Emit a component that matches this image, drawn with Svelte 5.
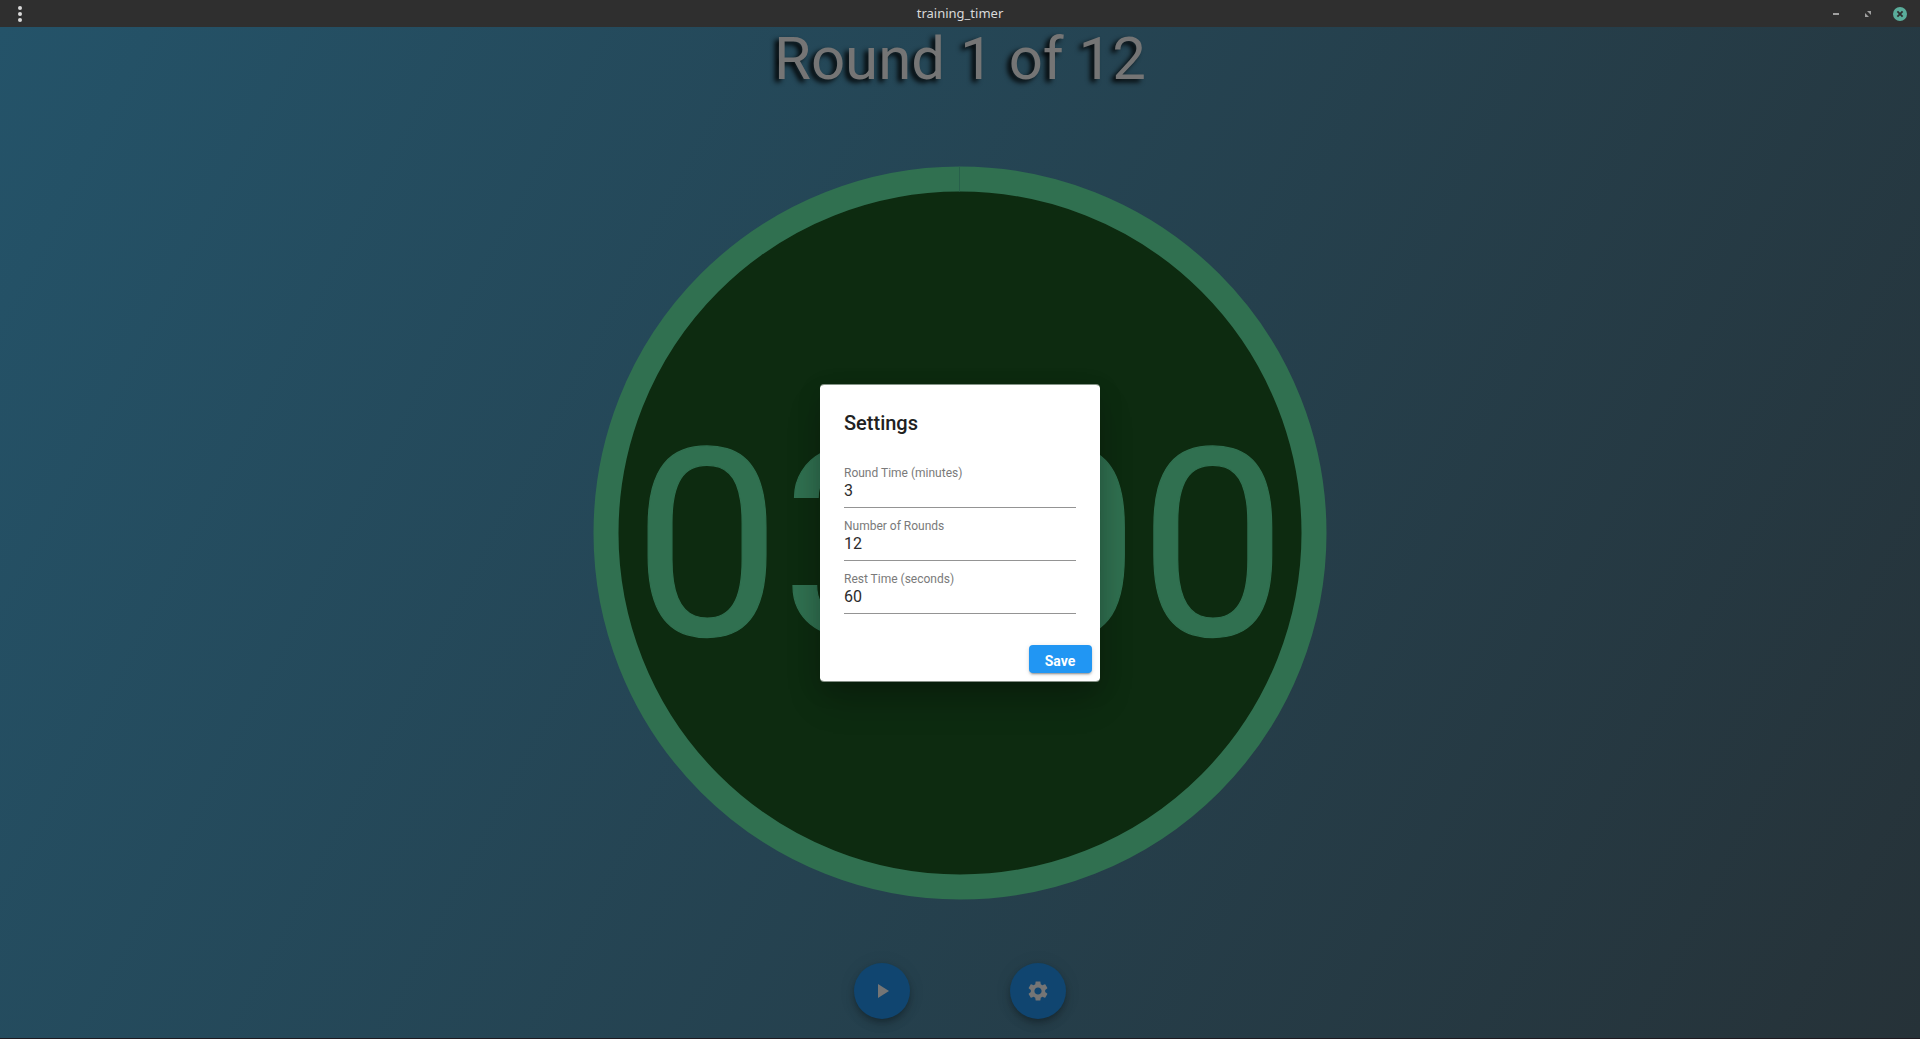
<script>
  const fields = [
    { id: 'round-time', label: 'Round Time (minutes)', value: '3' },
    { id: 'rounds', label: 'Number of Rounds', value: '12' },
    { id: 'rest-time', label: 'Rest Time (seconds)', value: '60' }
  ];
</script>

<div class="window">
  <header class="titlebar">
    <svg class="menu" viewBox="0 0 6 18" width="6" height="18">
      <circle cx="3" cy="3" r="2" /><circle cx="3" cy="9" r="2" /><circle cx="3" cy="15" r="2" />
    </svg>
    <span class="name">training_timer</span>
    <div class="controls">
      <svg width="6" height="14" viewBox="0 0 6 14"><path d="M0 6h6v2H0z" fill="#a0a0a0" /></svg>
      <svg width="6" height="6" viewBox="0 0 6 6"><path d="M2 0h4v4zM0 2l4 4H0z" fill="#a0a0a0" /></svg>
      <svg width="14" height="14" viewBox="0 0 14 14">
        <circle cx="7" cy="7" r="7" fill="#5aad9b" />
        <path d="M4.4 4.4l5.2 5.2M9.6 4.4L4.4 9.6" stroke="#2f2f2f" stroke-width="1.8" />
      </svg>
    </div>
  </header>

  <main>
    <h1>Round 1 of 12</h1>
    <div class="dial">
      <svg class="ring" viewBox="0 0 734 734">
        <circle cx="367" cy="367" r="354" />
        <path d="M366 .5h1v25h-1z" />
      </svg>
      <span class="time">03:00</span>
    </div>
    <div class="actions">
      <button class="fab" aria-label="Start">
        <svg viewBox="0 0 24 24"><path d="M8 5v14l11-7z" /></svg>
      </button>
      <button class="fab" aria-label="Settings">
        <svg viewBox="0 0 24 24"><path d="M19.14 12.94c.04-.3.06-.61.06-.94 0-.32-.02-.64-.07-.94l2.03-1.58c.18-.14.23-.41.12-.61l-1.92-3.32c-.12-.22-.37-.29-.59-.22l-2.39.96c-.5-.38-1.03-.7-1.62-.94l-.36-2.54c-.04-.24-.24-.41-.48-.41h-3.84c-.24 0-.43.17-.47.41l-.36 2.54c-.59.24-1.13.57-1.62.94l-2.39-.96c-.22-.08-.47 0-.59.22L2.74 8.87c-.12.21-.08.47.12.61l2.03 1.58c-.05.3-.09.63-.09.94s.02.64.07.94l-2.03 1.58c-.18.14-.23.41-.12.61l1.92 3.32c.12.22.37.29.59.22l2.39-.96c.5.38 1.03.7 1.62.94l.36 2.54c.05.24.24.41.48.41h3.84c.24 0 .44-.17.47-.41l.36-2.54c.59-.24 1.13-.56 1.62-.94l2.39.96c.22.08.47 0 .59-.22l1.92-3.32c.12-.22.07-.47-.12-.61l-2.01-1.58zM12 15.6c-1.98 0-3.6-1.62-3.6-3.6s1.62-3.6 3.6-3.6 3.6 1.62 3.6 3.6-1.62 3.6-3.6 3.6z" /></svg>
      </button>
    </div>

    <div class="overlay">
      <section class="dialog">
        <h2>Settings</h2>
        <div class="fields">
          {#each fields as field (field.id)}
            <div class="field">
              <label for={field.id}>{field.label}</label>
              <input id={field.id} value={field.value} />
            </div>
          {/each}
        </div>
        <button class="save">Save</button>
      </section>
    </div>
  </main>
</div>

<style>
  :global(body) {
    margin: 0;
    overflow: hidden;
  }
  .window {
    box-sizing: border-box;
    height: 1039px;
    display: flex;
    flex-direction: column;
    border-bottom: 1px solid #1f1a20;
    font-family: Roboto, sans-serif;
  }
  .titlebar {
    box-sizing: border-box;
    height: 27px;
    flex: none;
    padding: 0 13px 0 17px;
    display: grid;
    grid-template-columns: 1fr auto 1fr;
    align-items: center;
    background: #2f2f2f;
    color: #dadada;
    font: 13px/25px 'Noto Sans', sans-serif;
  }
  .name {
    margin: 0 4px 2px 0;
    line-height: 24px;
  }
  .menu {
    fill: #dadada;
  }
  .controls {
    display: flex;
    justify-content: flex-end;
    align-items: center;
  }
  .controls svg:nth-child(2) {
    margin: 0 22px 0 26px;
  }
  main {
    position: relative;
    flex: 1;
    display: flex;
    flex-direction: column;
    align-items: center;
    background: linear-gradient(117.8deg, #245369, #263238);
  }
  h1 {
    margin: -3px 0 0;
    height: 70px;
    font-size: 60px;
    line-height: 70px;
    font-weight: 400;
    color: #757575;
    text-shadow: -4px 3px 5px rgba(0, 0, 0, 0.95);
  }
  .dial {
    width: 734px;
    height: 734px;
    margin-top: 72px;
    display: grid;
    place-items: center;
  }
  .ring,
  .time {
    grid-area: 1 / 1;
  }
  .ring {
    width: 734px;
    height: 734px;
  }
  .ring circle {
    fill: #0d2b10;
    stroke: #307050;
    stroke-width: 25;
  }
  .ring path {
    fill: #28604b;
  }
  .time {
    padding-top: 26px;
    font-size: 262.3px;
    line-height: 308px;
    color: #307050;
    -webkit-text-stroke: 1.2px #307050;
    white-space: nowrap;
  }
  .actions {
    display: flex;
    gap: 100px;
    margin-top: 63px;
  }
  .fab {
    width: 56px;
    height: 56px;
    padding: 0;
    border: 0;
    border-radius: 50%;
    display: grid;
    place-items: center;
    background: #104570;
    box-shadow: 0 3px 5px -1px rgba(0, 0, 0, 0.2), 0 6px 10px rgba(0, 0, 0, 0.14), 0 1px 18px rgba(0, 0, 0, 0.08);
  }
  .fab svg {
    width: 24px;
    height: 24px;
    fill: #757575;
  }
  .overlay {
    position: absolute;
    inset: 0;
    padding-top: 1px;
    display: grid;
    place-items: center;
  }
  .dialog {
    box-sizing: border-box;
    width: 280px;
    height: 298px;
    padding: 24px 24px 0;
    border: solid rgba(255, 255, 255, 0.5);
    border-width: 1px 0;
    border-radius: 4px;
    background: #fff;
    background-clip: padding-box;
    display: flex;
    flex-direction: column;
    box-shadow: 0 20px 34px -4px rgba(0, 0, 0, 0.24), 0 6px 24px rgba(0, 0, 0, 0.14);
  }
  h2 {
    margin: 0;
    font-size: 20px;
    line-height: 28px;
    font-weight: 500;
    color: #212121;
  }
  .fields {
    margin-top: 18px;
  }
  .field {
    box-sizing: border-box;
    height: 53px;
    padding-top: 11px;
    border-bottom: 1px solid #949494;
    display: flex;
    flex-direction: column;
  }
  label {
    font-size: 12px;
    line-height: 14px;
    color: #7a7a7a;
  }
  input {
    margin-top: 1px;
    padding: 0;
    border: 0;
    outline: 0;
    background: none;
    font: 16px/20px Roboto, sans-serif;
    height: 20px;
    color: #2c2c2c;
  }
  .save {
    align-self: flex-end;
    width: 63px;
    height: 28px;
    margin: 31px -16px 0 0;
    padding: 4px 1px 0 0;
    border: 0;
    border-radius: 4px;
    background: #2196f3;
    color: #fff;
    font: 700 14px/24px Roboto, sans-serif;
    box-shadow: 0 3px 1px -2px rgba(0, 0, 0, 0.2), 0 2px 2px rgba(0, 0, 0, 0.14), 0 1px 5px rgba(0, 0, 0, 0.12);
  }
</style>
